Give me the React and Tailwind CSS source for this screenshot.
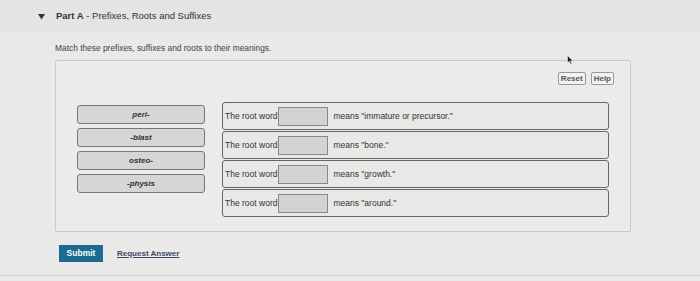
export default function App() {
  const tiles = ["peri-", "-blast", "osteo-", "-physis"];
  const rows = [
    'means "immature or precursor."',
    'means "bone."',
    'means "growth."',
    'means "around."',
  ];
  return (
    <div className="w-[700px] h-[281px] bg-[#e9e9e7] relative overflow-hidden text-[#333]" style={{ fontFamily: '"Liberation Sans", Arial, sans-serif' }}>
      <div className="h-[33px] bg-[#e4e4e2] flex items-center pl-[38px]">
        <svg width="7" height="6" viewBox="0 0 7 6" className="mr-[11px]"><path d="M0 0 L7 0 L3.5 5.5 Z" fill="#333" /></svg>
        <span className="text-[9.5px] text-[#333]"><b className="font-bold">Part A</b> - Prefixes, Roots and Suffixes</span>
      </div>
      <div className="pl-[55px] pt-[10px] text-[8.4px] text-[#444] leading-[11px]">Match these prefixes, suffixes and roots to their meanings.</div>
      <div className="ml-[55px] mt-[6px] w-[576px] h-[172px] border border-[#c9c9c7] rounded-[2px] bg-[#ebebe9] flex flex-col">
        <div className="flex justify-end gap-[5px] pr-[16px] pt-[11px]">
          <div className="h-[13px] px-[2px] border border-[#999] rounded-[2px] bg-[#f2f2f0] text-[8px] font-bold text-[#555] flex items-center">Reset</div>
          <div className="h-[13px] px-[2px] border border-[#999] rounded-[2px] bg-[#f2f2f0] text-[8px] font-bold text-[#555] flex items-center">Help</div>
        </div>
        <div className="flex pl-[21px] pt-[17px]">
          <div className="flex flex-col gap-[4px] w-[128px] pt-[3px]">
            {tiles.map((t) => (
              <div key={t} className="h-[19px] border-[1.5px] border-[#777] rounded-[3px] bg-[#d6d6d4] flex items-center justify-center text-[8px] font-bold italic text-[#333]">{t}</div>
            ))}
          </div>
          <div className="flex flex-col gap-[1px] ml-[17px] w-[387px]">
            {rows.map((r) => (
              <div key={r} className="h-[28px] border-[1.5px] border-[#666] rounded-[3px] bg-[#e8e8e6] flex items-center pl-[2px] text-[8.5px] text-[#333]">
                <span>The root word</span>
                <div className="w-[50px] h-[19px] border border-[#888] bg-[#d3d3d1] ml-[1px] mr-[5px]"></div>
                <span>{r}</span>
              </div>
            ))}
          </div>
        </div>
      </div>
      <div className="flex items-center pl-[59px] mt-[13px]">
        <div className="w-[44px] h-[17px] bg-[#1b6c90] text-white text-[8.5px] font-bold flex items-center justify-center">Submit</div>
        <span className="ml-[14px] text-[8px] text-[#3d4a66] underline font-bold">Request Answer</span>
      </div>
      <div className="absolute left-0 right-0 top-[275px] border-t border-[#d2d2d0]"></div>
      <svg className="absolute left-[567px] top-[55px]" width="7" height="10" viewBox="0 0 7 10"><path d="M0.5 0.5 L0.5 8 L2.3 6.3 L3.6 9.3 L4.8 8.8 L3.6 5.9 L6 5.9 Z" fill="#222" stroke="#fff" strokeWidth="0.5" /></svg>
    </div>
  );
}
